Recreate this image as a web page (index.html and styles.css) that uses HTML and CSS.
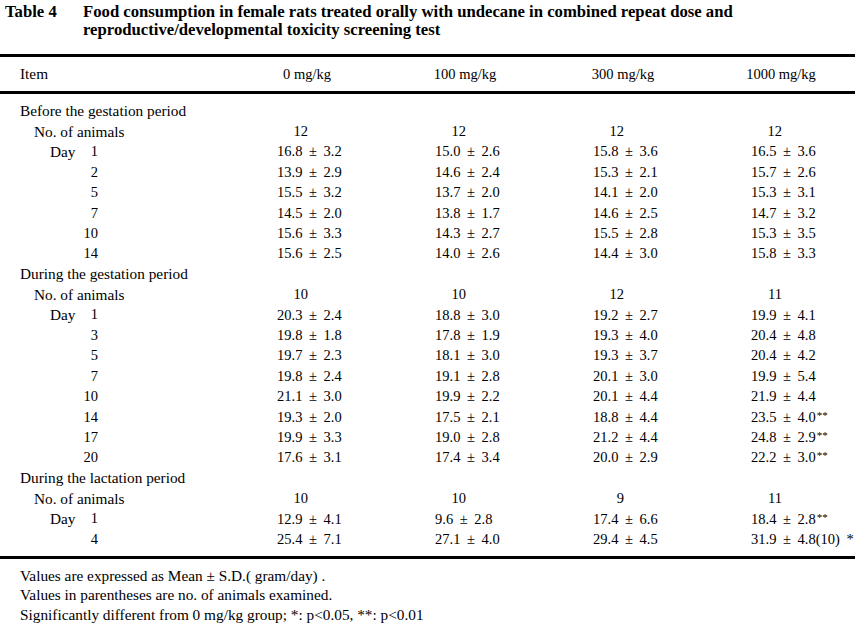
FILE: index.html
```html
<!DOCTYPE html>
<html lang="en">
<head>
<meta charset="utf-8">
<title>Table 4</title>
<link rel="stylesheet" href="styles.css">
</head>
<body>
<div class="caption">
  <div class="cap-label">Table 4</div>
  <div class="cap-text">Food consumption in female rats treated orally with undecane in combined repeat dose and reproductive/developmental toxicity screening test</div>
</div>

<div class="table">
  <div class="head">
    <div class="hc item">Item</div>
    <div class="hc dose">0 mg/kg</div>
    <div class="hc dose">100 mg/kg</div>
    <div class="hc dose">300 mg/kg</div>
    <div class="hc dose">1000 mg/kg</div>
  </div>

  <div class="body">
    <div class="row"><div class="lab l1">Before the gestation period</div></div>
    <div class="row"><div class="lab l2">No. of animals</div><div class="v"><span class="n">12</span></div><div class="v"><span class="n">12</span></div><div class="v"><span class="n">12</span></div><div class="v"><span class="n">12</span></div></div>
    <div class="row"><div class="lab l3"><span class="day">Day</span><span class="dn">1</span></div><div class="v">16.8 ± 3.2</div><div class="v">15.0 ± 2.6</div><div class="v">15.8 ± 3.6</div><div class="v">16.5 ± 3.6</div></div>
    <div class="row"><div class="lab l3"><span class="day"></span><span class="dn">2</span></div><div class="v">13.9 ± 2.9</div><div class="v">14.6 ± 2.4</div><div class="v">15.3 ± 2.1</div><div class="v">15.7 ± 2.6</div></div>
    <div class="row"><div class="lab l3"><span class="day"></span><span class="dn">5</span></div><div class="v">15.5 ± 3.2</div><div class="v">13.7 ± 2.0</div><div class="v">14.1 ± 2.0</div><div class="v">15.3 ± 3.1</div></div>
    <div class="row"><div class="lab l3"><span class="day"></span><span class="dn">7</span></div><div class="v">14.5 ± 2.0</div><div class="v">13.8 ± 1.7</div><div class="v">14.6 ± 2.5</div><div class="v">14.7 ± 3.2</div></div>
    <div class="row"><div class="lab l3"><span class="day"></span><span class="dn">10</span></div><div class="v">15.6 ± 3.3</div><div class="v">14.3 ± 2.7</div><div class="v">15.5 ± 2.8</div><div class="v">15.3 ± 3.5</div></div>
    <div class="row"><div class="lab l3"><span class="day"></span><span class="dn">14</span></div><div class="v">15.6 ± 2.5</div><div class="v">14.0 ± 2.6</div><div class="v">14.4 ± 3.0</div><div class="v">15.8 ± 3.3</div></div>

    <div class="row"><div class="lab l1">During the gestation period</div></div>
    <div class="row"><div class="lab l2">No. of animals</div><div class="v"><span class="n">10</span></div><div class="v"><span class="n">10</span></div><div class="v"><span class="n">12</span></div><div class="v"><span class="n">11</span></div></div>
    <div class="row"><div class="lab l3"><span class="day">Day</span><span class="dn">1</span></div><div class="v">20.3 ± 2.4</div><div class="v">18.8 ± 3.0</div><div class="v">19.2 ± 2.7</div><div class="v">19.9 ± 4.1</div></div>
    <div class="row"><div class="lab l3"><span class="day"></span><span class="dn">3</span></div><div class="v">19.8 ± 1.8</div><div class="v">17.8 ± 1.9</div><div class="v">19.3 ± 4.0</div><div class="v">20.4 ± 4.8</div></div>
    <div class="row"><div class="lab l3"><span class="day"></span><span class="dn">5</span></div><div class="v">19.7 ± 2.3</div><div class="v">18.1 ± 3.0</div><div class="v">19.3 ± 3.7</div><div class="v">20.4 ± 4.2</div></div>
    <div class="row"><div class="lab l3"><span class="day"></span><span class="dn">7</span></div><div class="v">19.8 ± 2.4</div><div class="v">19.1 ± 2.8</div><div class="v">20.1 ± 3.0</div><div class="v">19.9 ± 5.4</div></div>
    <div class="row"><div class="lab l3"><span class="day"></span><span class="dn">10</span></div><div class="v">21.1 ± 3.0</div><div class="v">19.9 ± 2.2</div><div class="v">20.1 ± 4.4</div><div class="v">21.9 ± 4.4</div></div>
    <div class="row"><div class="lab l3"><span class="day"></span><span class="dn">14</span></div><div class="v">19.3 ± 2.0</div><div class="v">17.5 ± 2.1</div><div class="v">18.8 ± 4.4</div><div class="v">23.5 ± 4.0<span class="sig">**</span></div></div>
    <div class="row"><div class="lab l3"><span class="day"></span><span class="dn">17</span></div><div class="v">19.9 ± 3.3</div><div class="v">19.0 ± 2.8</div><div class="v">21.2 ± 4.4</div><div class="v">24.8 ± 2.9<span class="sig">**</span></div></div>
    <div class="row"><div class="lab l3"><span class="day"></span><span class="dn">20</span></div><div class="v">17.6 ± 3.1</div><div class="v">17.4 ± 3.4</div><div class="v">20.0 ± 2.9</div><div class="v">22.2 ± 3.0<span class="sig">**</span></div></div>

    <div class="row"><div class="lab l1">During the lactation period</div></div>
    <div class="row"><div class="lab l2">No. of animals</div><div class="v"><span class="n">10</span></div><div class="v"><span class="n">10</span></div><div class="v"><span class="n">9</span></div><div class="v"><span class="n">11</span></div></div>
    <div class="row"><div class="lab l3"><span class="day">Day</span><span class="dn">1</span></div><div class="v">12.9 ± 4.1</div><div class="v">9.6 ± 2.8</div><div class="v">17.4 ± 6.6</div><div class="v">18.4 ± 2.8<span class="sig">**</span></div></div>
    <div class="row"><div class="lab l3"><span class="day"></span><span class="dn">4</span></div><div class="v">25.4 ± 7.1</div><div class="v">27.1 ± 4.0</div><div class="v">29.4 ± 4.5</div><div class="v">31.9 ± 4.8(10) *</div></div>
  </div>
</div>

<div class="notes">
  <p>Values are expressed as Mean ± S.D.( gram/day) .</p>
  <p>Values in parentheses are no. of animals examined.</p>
  <p>Significantly different from 0 mg/kg group; *: p&lt;0.05, **: p&lt;0.01</p>
</div>
</body>
</html>
```

FILE: styles.css
```css
html, body {
  margin: 0;
  padding: 0;
  background: #ffffff;
  color: #000000;
}

body {
  width: 855px;
  font-family: "Liberation Serif", "Times New Roman", serif;
  font-size: 15.3px;
}

.caption {
  display: flex;
  padding: 3px 0 0 5px;
  font-weight: bold;
  font-size: 16.7px;
  line-height: 18px;
}

.cap-label {
  width: 78px;
  flex: none;
}

.cap-text {
  width: 720px;
}

.table {
  margin-top: 15px;
  border-top: 3px solid #000;
  border-bottom: 3px solid #000;
}

.head {
  display: grid;
  grid-template-columns: 223px repeat(4, 158px);
  height: 34px;
  align-items: center;
  border-bottom: 3px solid #000;
}

.hc.item {
  padding-left: 20px;
}

.hc.dose {
  padding-left: 10px;
  text-align: center;
  font-size: 14.5px;
}

.body {
  padding: 7px 0 6px;
}

.row {
  display: grid;
  grid-template-columns: 223px repeat(4, 158px);
  height: 20.4px;
  align-items: center;
  white-space: nowrap;
}

.lab.l1 {
  padding-left: 20px;
  grid-column: 1 / -1;
}

.lab.l2 {
  padding-left: 34px;
}

.lab.l3 {
  display: flex;
  padding-left: 50px;
}

.day {
  width: 28px;
}

.dn {
  width: 20px;
  text-align: right;
  font-size: 14.5px;
}

.v {
  padding-left: 54px;
  font-size: 14.5px;
  word-spacing: 3px;
}

.n {
  display: inline-block;
  width: 31px;
  text-align: right;
}

.sig {
  font-size: 11px;
  vertical-align: 3px;
  margin-left: 1px;
}

.notes {
  padding: 7px 0 0 20px;
}

.notes p {
  margin: 0;
  line-height: 19.8px;
}
```
